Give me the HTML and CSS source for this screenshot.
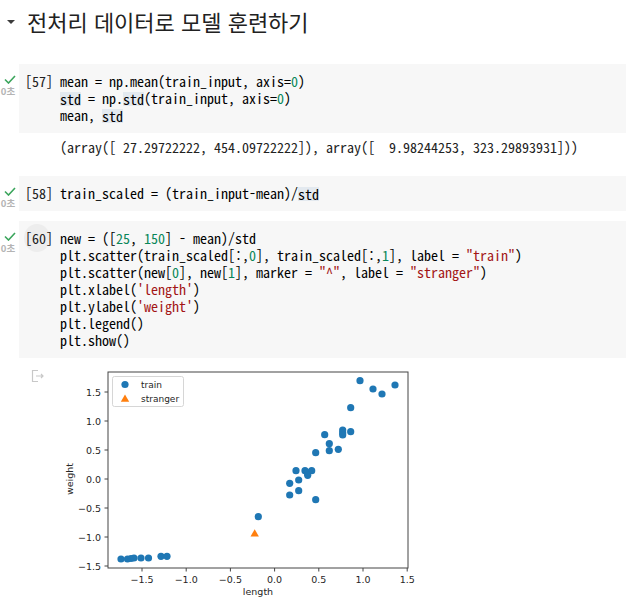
FILE: index.html
```html
<!DOCTYPE html>
<html lang="ko">
<head>
<meta charset="utf-8">
<link rel="stylesheet" href="styles.css">
</head>
<body>
<div class="heading">
  <span class="caret"></span>
  <h2 class="title">전처리 데이터로 모델 훈련하기</h2>
</div>

<div class="cell c57">
  <div class="gutter">
    <svg class="check" width="12" height="9" viewBox="0 0 12 9"><path d="M1 4.5 L4.5 8 L11 1" fill="none" stroke="#3ba55c" stroke-width="1.6"/></svg>
    <span class="time">0초</span>
  </div>
  <div class="box">
    <span class="prompt">[57]</span>
    <pre class="code">mean = np.mean(train_input, axis=<span class="n">0</span>)
<span class="hl">std</span> = np.<span class="hl">std</span>(train_input, axis=<span class="n">0</span>)
mean, <span class="hl">std</span></pre>
  </div>
</div>
<div class="output">
  <pre class="code">(array([ 27.29722222, 454.09722222]), array([  9.98244253, 323.29893931]))</pre>
</div>

<div class="cell c58">
  <div class="gutter">
    <svg class="check" width="12" height="9" viewBox="0 0 12 9"><path d="M1 4.5 L4.5 8 L11 1" fill="none" stroke="#3ba55c" stroke-width="1.6"/></svg>
    <span class="time">0초</span>
  </div>
  <div class="box">
    <span class="prompt">[58]</span>
    <pre class="code">train_scaled = (train_input-mean)/<span class="hl">std</span></pre>
  </div>
</div>

<div class="cell c60">
  <div class="gutter">
    <svg class="check" width="12" height="9" viewBox="0 0 12 9"><path d="M1 4.5 L4.5 8 L11 1" fill="none" stroke="#3ba55c" stroke-width="1.6"/></svg>
    <span class="time">0초</span>
  </div>
  <div class="box">
    <span class="prompt hover">[60]</span>
    <pre class="code">new = ([<span class="n">25</span>, <span class="n">150</span>] - mean)/std
plt.scatter(train_scaled[:,<span class="n">0</span>], train_scaled[:,<span class="n">1</span>], label = <span class="s">"train"</span>)
plt.scatter(new[<span class="n">0</span>], new[<span class="n">1</span>], marker = <span class="s">"^"</span>, label = <span class="s">"stranger"</span>)
plt.xlabel(<span class="s">'length'</span>)
plt.ylabel(<span class="s">'weight'</span>)
plt.legend()
plt.show()</pre>
  </div>
</div>

<div class="plot-out">
<svg class="plot" width="400" height="246" viewBox="20 362 400 246">
  <g fill="none" stroke="#c8c8c8" stroke-width="1.2">
    <path d="M38 370.5 H32.5 V381.5 H38"/>
    <path d="M36 376 H43 M41 374 L43 376 L41 378"/>
  </g>
  <rect x="108" y="372" width="300" height="196" fill="#fff" stroke="#444" stroke-width="1"/>
  <g stroke="#444" stroke-width="1">
    <path d="M104.5 392H108M104.5 421H108M104.5 450H108M104.5 479H108M104.5 508H108M104.5 537H108M104.5 566H108"/>
    <path d="M142 568V571.5M186.2 568V571.5M230.4 568V571.5M274.6 568V571.5M318.8 568V571.5M363 568V571.5M407.2 568V571.5"/>
  </g>
  <g class="tick" text-anchor="end">
    <text x="101" y="395.5">1.5</text>
    <text x="101" y="424.5">1.0</text>
    <text x="101" y="453.5">0.5</text>
    <text x="101" y="482.5">0.0</text>
    <text x="101" y="511.5">−0.5</text>
    <text x="101" y="540.5">−1.0</text>
    <text x="101" y="569.5">−1.5</text>
  </g>
  <g class="tick" text-anchor="middle">
    <text x="142" y="582.5">−1.5</text>
    <text x="186.2" y="582.5">−1.0</text>
    <text x="230.4" y="582.5">−0.5</text>
    <text x="274.6" y="582.5">0.0</text>
    <text x="318.8" y="582.5">0.5</text>
    <text x="363" y="582.5">1.0</text>
    <text x="407.2" y="582.5">1.5</text>
  </g>
  <text class="tick" x="258" y="594.5" text-anchor="middle">length</text>
  <text class="tick" x="0" y="0" text-anchor="middle" transform="translate(73 479) rotate(-90)">weight</text>
  <g fill="#1f77b4">
    <circle cx="121" cy="559" r="3.6"/><circle cx="127.5" cy="559" r="3.6"/><circle cx="131" cy="558.5" r="3.6"/><circle cx="134" cy="558" r="3.6"/>
    <circle cx="141" cy="558" r="3.6"/><circle cx="148.5" cy="558" r="3.6"/><circle cx="161" cy="556.3" r="3.6"/><circle cx="167" cy="556.3" r="3.6"/>
    <circle cx="258.3" cy="516.7" r="3.6"/>
    <circle cx="289.7" cy="495" r="3.6"/><circle cx="298.7" cy="490.7" r="3.6"/><circle cx="315.7" cy="499.7" r="3.6"/>
    <circle cx="289.7" cy="483.3" r="3.6"/><circle cx="298.7" cy="480" r="3.6"/>
    <circle cx="296" cy="470.7" r="3.6"/><circle cx="305" cy="470.7" r="3.6"/><circle cx="307.3" cy="472.7" r="3.6"/><circle cx="311.7" cy="470.7" r="3.6"/><circle cx="307.7" cy="475.3" r="3.6"/>
    <circle cx="315.7" cy="452.7" r="3.6"/><circle cx="329.3" cy="450.7" r="3.6"/><circle cx="338.3" cy="449.3" r="3.6"/><circle cx="329.3" cy="443.7" r="3.6"/><circle cx="324.7" cy="434.7" r="3.6"/>
    <circle cx="342.7" cy="430" r="3.6"/><circle cx="342.7" cy="432.7" r="3.6"/><circle cx="342.7" cy="435" r="3.6"/><circle cx="350.7" cy="431.7" r="3.6"/>
    <circle cx="350.7" cy="407.7" r="3.6"/>
    <circle cx="360" cy="380.7" r="3.6"/><circle cx="373" cy="389" r="3.6"/><circle cx="382" cy="394" r="3.6"/><circle cx="395" cy="385" r="3.6"/>
  </g>
  <path d="M254.7 529.3 L258.9 536.6 L250.5 536.6 Z" fill="#ff7f0e"/>
  <rect x="112.5" y="376.5" width="71" height="30" rx="2" fill="#fff" fill-opacity="0.8" stroke="#d6d6d6" stroke-width="1"/>
  <circle cx="125" cy="384.5" r="3.6" fill="#1f77b4"/>
  <path d="M125 394.5 L129.2 401.8 L120.8 401.8 Z" fill="#ff7f0e"/>
  <text class="leg" x="141" y="388">train</text>
  <text class="leg" x="141" y="402">stranger</text>
</svg>
</div>
</body>
</html>
```
FILE: styles.css
```css
* { box-sizing: border-box; }
html, body { margin: 0; padding: 0; background: #fff; }
body {
  width: 626px;
  overflow: hidden;
  font-family: "Noto Sans CJK KR", "Noto Sans", sans-serif;
  color: #212121;
}
.heading {
  display: flex;
  align-items: center;
  height: 42px;
  padding-left: 7px;
  margin-bottom: 22px;
}
.caret {
  width: 0;
  height: 0;
  border-left: 4.5px solid transparent;
  border-right: 4.5px solid transparent;
  border-top: 4.5px solid #3c3c3c;
  margin-right: 12px;
  margin-top: 1px;
}
.title {
  margin: 0;
  font-size: 22px;
  font-weight: 400;
  color: #212121;
  line-height: 26px;
}
.cell {
  display: flex;
  align-items: flex-start;
}
.gutter {
  width: 19px;
  display: flex;
  flex-direction: column;
  align-items: center;
  padding-top: 11px;
}
.check { display: block; margin-left: 1px; }
.time {
  font-size: 9.5px;
  line-height: 11px;
  color: #b4b4b4;
  font-weight: 700;
  margin-top: 2px;
  margin-right: 3px;
}
.box {
  flex: 1;
  display: flex;
  align-items: flex-start;
  background: #f7f7f7;
  padding: 9px 0 9px 6px;
}
.prompt {
  width: 35px;
  flex: none;
  font-family: "Noto Sans Mono CJK KR", "DejaVu Sans Mono", monospace;
  font-size: 14px;
  line-height: 17px;
  color: #212121;
  position: relative;
  z-index: 0;
}
.prompt.hover::before {
  content: "";
  position: absolute;
  left: -1px;
  top: -6px;
  width: 26px;
  height: 28px;
  border-radius: 50%;
  background: #ededed;
  z-index: -1;
}
.code {
  margin: 0;
  font-family: "Noto Sans Mono CJK KR", "DejaVu Sans Mono", monospace;
  font-size: 14px;
  line-height: 17px;
  color: #000;
  white-space: pre;
}
.n, .s, .hl {
  display: inline-block;
  line-height: 17px;
  height: 17px;
  vertical-align: top;
}
.n { color: #098658; }
.s { color: #a31515; }
.hl {
  background-color: #e3e9ef;
  background-clip: content-box;
  padding: 2px 0 1px;
  line-height: 14px;
}
.output {
  padding: 6px 0 0 60px;
  height: 43px;
}
.output .code { color: #212121; }
.c58 { margin-bottom: 10px; }
.plot-out {
  padding: 4px 0 0 20px;
}
.plot { display: block; }
.tick {
  font-family: "DejaVu Sans", sans-serif;
  font-size: 9.5px;
  fill: #262626;
}
.leg {
  font-family: "DejaVu Sans", sans-serif;
  font-size: 9px;
  fill: #262626;
}
```
